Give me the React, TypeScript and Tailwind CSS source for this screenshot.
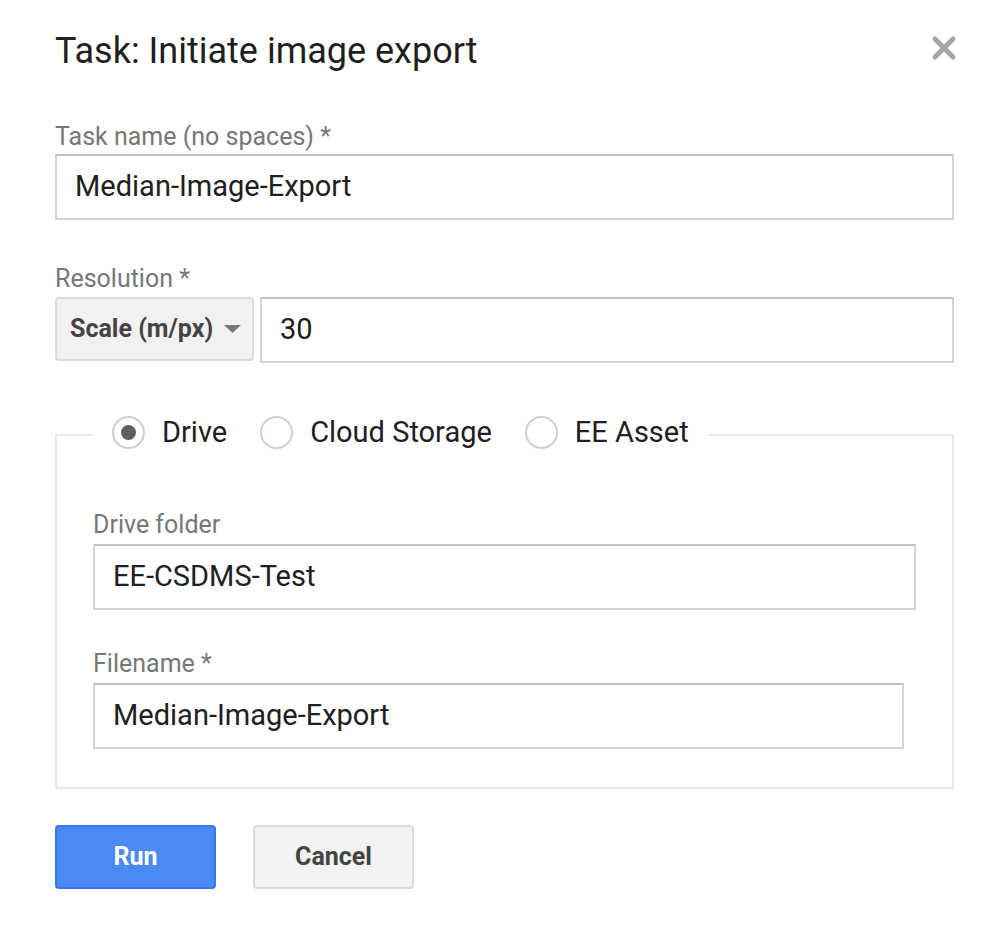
import React from "react";

function Label({ children, className = "" }: { children: React.ReactNode; className?: string }) {
  return (
    <div className={`text-[25px] leading-[28px] text-[#777777] ${className}`}>{children}</div>
  );
}

function TextBox({ value, className = "" }: { value: string; className?: string }) {
  return (
    <div
      className={`flex h-[66px] items-center border-2 border-[#d4d4d4] border-t-[#c0c0c0] bg-white pl-[18px] text-[29px] text-[#202020] ${className}`}
    >
      {value}
    </div>
  );
}

function Radio({ label, checked = false }: { label: string; checked?: boolean }) {
  return (
    <div className="flex items-center gap-[17px]">
      <span className="flex h-[33px] w-[33px] items-center justify-center rounded-full border-2 border-[#d0d0d0] bg-white">
        {checked && <span className="h-[15px] w-[15px] rounded-full bg-[#5f5f5f]" />}
      </span>
      <span className="text-[29px] leading-[34px] text-[#202020]">{label}</span>
    </div>
  );
}

export default function App() {
  return (
    <div
      className="min-h-[938px] w-[991px] bg-white pl-[55px] pr-[37px] pt-[31px]"
      style={{ fontFamily: "Roboto, 'Liberation Sans', sans-serif" }}
    >
      {/* header */}
      <div className="flex items-start justify-between">
        <h1 className="text-[36px] leading-[40px] text-[#1f1f1f]">Task: Initiate image export</h1>
        <svg className="-mr-[3px] mt-[4px]" width="26" height="26" viewBox="0 0 26 26">
          <path d="M4 4 L22 22 M22 4 L4 22" stroke="#a3a3a3" strokeWidth="5" strokeLinecap="round" />
        </svg>
      </div>

      <Label className="mt-[52px]">Task name (no spaces) *</Label>
      <TextBox value="Median-Image-Export" className="mt-[3px]" />

      <Label className="mt-[45px]">Resolution *</Label>
      <div className="mt-[4px] flex items-start gap-[6px]">
        <div className="flex h-[64px] w-[199px] items-center justify-between rounded-[4px] border-2 border-[#dcdcdc] bg-[#f1f1f1] pl-[13px] pr-[11px]">
          <span className="text-[25px] font-bold text-[#444444]">Scale (m/px)</span>
          <svg width="17" height="8" viewBox="0 0 17 8">
            <path d="M0 0 L17 0 L8.5 8 Z" fill="#777777" />
          </svg>
        </div>
        <TextBox value="30" className="flex-1" />
      </div>

      {/* destination */}
      <fieldset className="mt-[52px] border-2 border-[#e8e8e8] p-0">
        <legend className="ml-[35px] flex items-start gap-[33px] px-[20px] pb-[5px]">
          <Radio label="Drive" checked />
          <Radio label="Cloud Storage" />
          <Radio label="EE Asset" />
        </legend>
        <div className="px-[36px] pb-[38px] pt-[57px]">
          <Label>Drive folder</Label>
          <TextBox value="EE-CSDMS-Test" className="mt-[5px]" />
          <Label className="mt-[40px]">Filename *</Label>
          <TextBox value="Median-Image-Export" className="mt-[5px] w-[811px]" />
        </div>
      </fieldset>

      <div className="mt-[36px] flex gap-[37px]">
        <button className="h-[64px] w-[161px] rounded-[4px] border-2 border-[#3b78e7] bg-[#4a8af4] text-[25px] font-bold text-white">
          Run
        </button>
        <button className="h-[64px] w-[161px] rounded-[4px] border-2 border-[#dcdcdc] bg-[#f2f2f2] text-[25px] font-bold text-[#444444]">
          Cancel
        </button>
      </div>
    </div>
  );
}
